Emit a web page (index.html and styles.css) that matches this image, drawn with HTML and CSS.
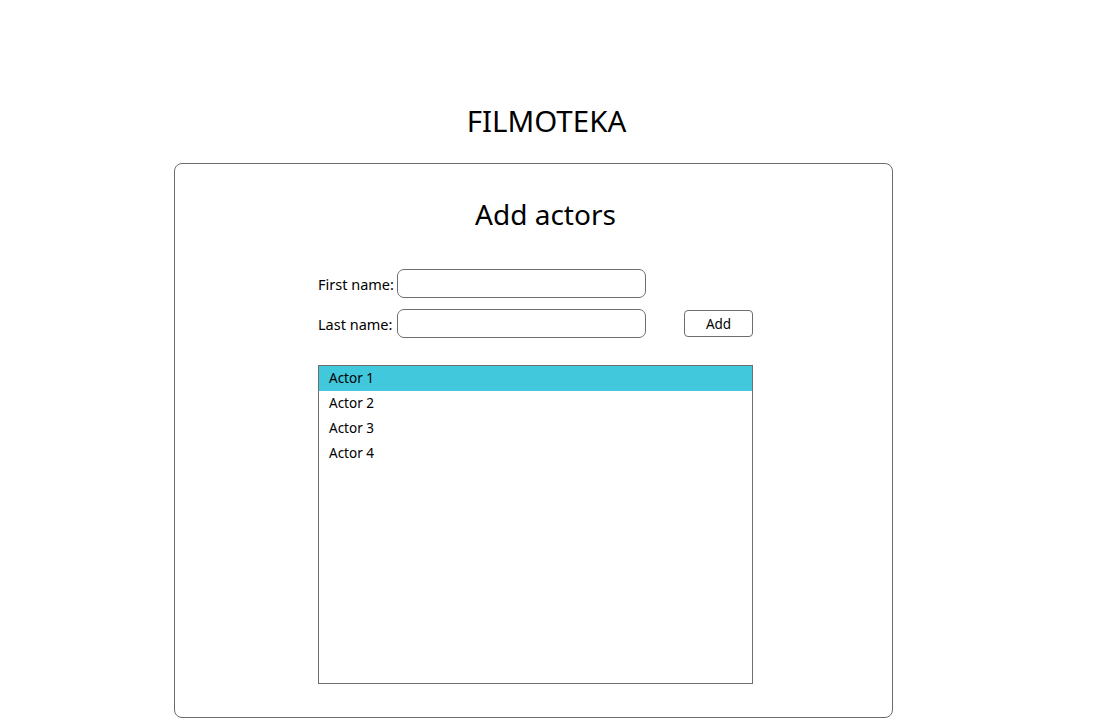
FILE: index.html
```html
<!DOCTYPE html>
<html>
<head>
<meta charset="utf-8">
<link rel="stylesheet" href="styles.css">
</head>
<body>
<header class="top">
  <h1 class="brand">FILMOTEKA</h1>
</header>
<main class="card">
  <h2 class="heading">Add actors</h2>
  <div class="form">
    <label class="lbl">First name:</label>
    <input class="field" type="text">
    <span></span>
    <label class="lbl">Last name:</label>
    <input class="field" type="text">
    <button class="btn">Add</button>
  </div>
  <ul class="list">
    <li class="item selected">Actor 1</li>
    <li class="item">Actor 2</li>
    <li class="item">Actor 3</li>
    <li class="item">Actor 4</li>
  </ul>
</main>
</body>
</html>
```

FILE: styles.css
```css
* { box-sizing: border-box; }
html, body { margin: 0; padding: 0; background: #fff; }
body {
  font-family: "Noto Sans", "Open Sans", sans-serif;
  color: #000;
  width: 1100px;
  height: 719px;
  overflow: hidden;
}
.top {
  padding: 100px 7px 0 0;
  height: 163px;
  text-align: center;
}
.brand {
  margin: 0;
  font-weight: 400;
  font-size: 29.5px;
  line-height: 42px;
}
.card {
  margin-left: 174px;
  width: 719px;
  height: 555px;
  border: 1px solid #6b6b6b;
  border-radius: 8px;
  padding: 31px 0 0 143px;
}
.heading {
  margin: 0 0 0 -143px;
  padding-left: 24px;
  text-align: center;
  font-weight: 400;
  font-size: 28px;
  line-height: 38px;
}
.form {
  margin-top: 36px;
  display: grid;
  grid-template-columns: 79px 249px auto;
  row-gap: 11px;
  align-items: center;
}
.lbl {
  font-size: 14.5px;
  line-height: 20px;
  white-space: nowrap;
}
.field {
  width: 249px;
  height: 29px;
  border: 1px solid #6e6e6e;
  border-radius: 7px;
  background: #fff;
  margin: 0;
  padding: 0 6px;
}
.btn {
  margin-left: 38px;
  width: 69px;
  height: 27px;
  border: 1px solid #6e6e6e;
  border-radius: 4px;
  background: #fff;
  font-family: inherit;
  font-size: 13.5px;
  color: #000;
  padding: 0;
}
.list {
  list-style: none;
  margin: 27px 0 0 0;
  padding: 0;
  width: 435px;
  height: 319px;
  border: 1px solid #6e6e6e;
}
.item {
  height: 25px;
  line-height: 24px;
  padding-left: 10px;
  font-size: 13.5px;
}
.item.selected {
  background: #41c8dc;
}
```
